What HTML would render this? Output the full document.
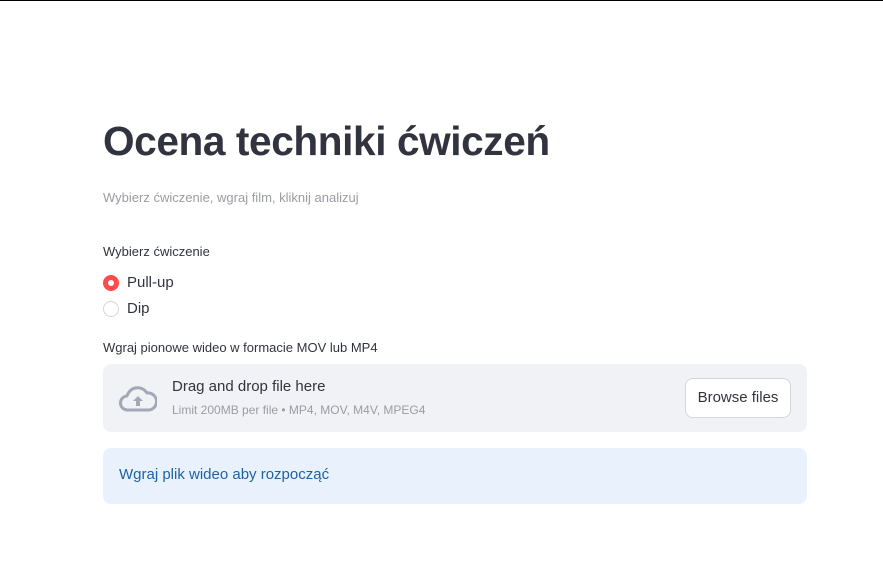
<!DOCTYPE html>
<html><head><meta charset="utf-8"><style>
*{margin:0;padding:0;box-sizing:border-box}
body{width:883px;height:574px;background:#fff;font-family:"Liberation Sans",sans-serif;color:#31333f;position:relative;overflow:hidden;border-top:1px solid #000}
.a{position:absolute}
h1{position:absolute;left:103px;top:117px;font-size:40.6px;font-weight:700;letter-spacing:-0.4px;color:#31333f}
.cap{left:103px;top:189px;font-size:13px;color:#9a9ca3}
.lab{font-size:13px;color:#31333f}
.radio{width:16px;height:16px;border-radius:50%}
.box{left:103px;top:363px;width:704px;height:68px;background:#f0f2f6;border-radius:8px}
.btn{left:685px;top:377px;width:106px;height:40px;background:#fff;border:1px solid #d6d6d9;border-radius:8px;font-size:15px;text-align:center;line-height:38px}
.info{left:103px;top:447px;width:704px;height:56px;background:#e8f1fc;border-radius:8px;color:#1e62a6;font-size:15px;padding:18px 16px}
</style></head><body>
<h1>Ocena techniki ćwiczeń</h1>
<div class="a cap">Wybierz ćwiczenie, wgraj film, kliknij analizuj</div>
<div class="a lab" style="left:103px;top:243px">Wybierz ćwiczenie</div>
<div class="a radio" style="left:103px;top:274px;background:#ff4b4b"><div style="position:absolute;left:5px;top:5px;width:6px;height:6px;border-radius:50%;background:#fff"></div></div>
<div class="a" style="left:127px;top:273px;font-size:15px">Pull-up</div>
<div class="a radio" style="left:103px;top:300px;border:1px solid #d5d6da"></div>
<div class="a" style="left:127px;top:299px;font-size:15px">Dip</div>
<div class="a lab" style="left:103px;top:339px">Wgraj pionowe wideo w formacie MOV lub MP4</div>
<div class="a box"></div>
<svg class="a" style="left:119px;top:382px" width="38" height="30" viewBox="0 0 38 30"><path d="M9 27a7 7 0 0 1-1-14 11 11 0 0 1 20-3 8 8 0 0 1 2 17z" fill="none" stroke="#a3a8b8" stroke-width="3" stroke-linejoin="round"/><path d="M19 13l-5 5h3v5h4v-5h3z" fill="#a3a8b8"/></svg>
<div class="a" style="left:172px;top:377px;font-size:15px">Drag and drop file here</div>
<div class="a" style="left:172px;top:402px;font-size:12px;color:#9a9ca3">Limit 200MB per file • MP4, MOV, M4V, MPEG4</div>
<div class="a btn">Browse files</div>
<div class="a info">Wgraj plik wideo aby rozpocząć</div>
</body></html>
